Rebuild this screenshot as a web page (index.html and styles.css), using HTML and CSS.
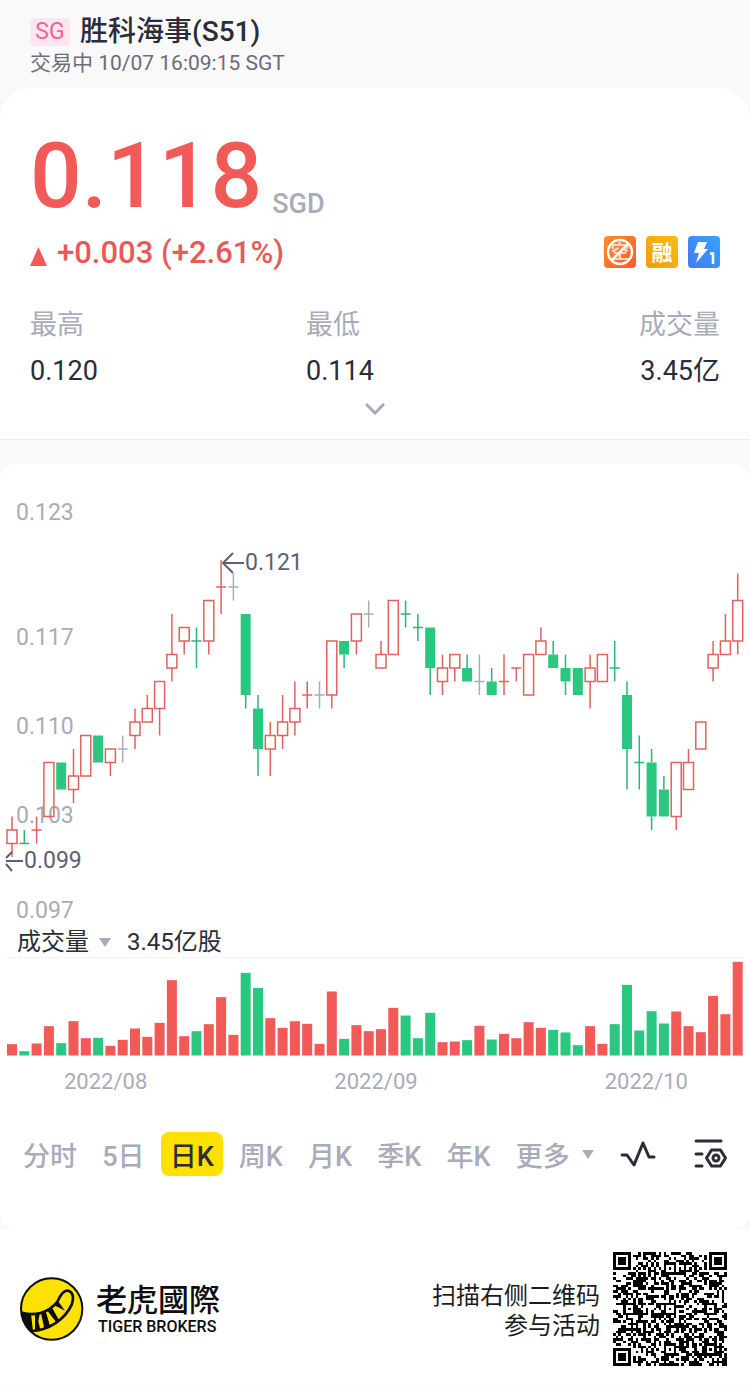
FILE: index.html
```html
<!DOCTYPE html>
<html lang="zh-CN">
<head>
    <meta charset="UTF-8">
    <meta name="viewport" content="width=device-width, initial-scale=1.0">
    <title>胜科海事(S51)</title>
    <link rel="stylesheet" href="styles.css">
</head>
<body>
    <header class="header">
        <h1 class="stock-name"><span class="market">SG</span>胜科海事(S51)</h1>
        <p class="status">交易中 10/07 16:09:15 SGT</p>
    </header>

    <main>
        <section class="quote">
            <div class="price-row">
                <span class="price">0.118</span>
                <span class="currency">SGD</span>
            </div>
            <div class="change-row">
                <svg class="up" viewBox="0 0 17 19" aria-hidden="true"><path d="M8.500 0L17 19H0z"/></svg>
                <span class="change">+0.003 (+2.61%)</span>
                <div class="badges">
                    <svg class="badge" viewBox="0 0 32 32" role="img" aria-label="禁止卖空">
                        <defs><linearGradient id="orange" x1="0" y1="0" x2="1" y2="1"><stop offset="0" stop-color="#fb8c2c"/><stop offset="1" stop-color="#fb5c2a"/></linearGradient></defs>
                        <rect width="32" height="32" rx="4" fill="url(#orange)"/>
                        <text x="16" y="23" class="badge-short">空</text>
                        <circle cx="16" cy="16" r="12" fill="none" stroke="#fff" stroke-width="2.500"/>
                        <path d="M7.500 24.500l17-17" stroke="#fff" stroke-width="2.500"/>
                    </svg>
                    <svg class="badge" viewBox="0 0 32 32" role="img" aria-label="可融资">
                        <defs><linearGradient id="amber" x1="1" y1="0" x2="0" y2="1"><stop offset="0" stop-color="#fbbc18"/><stop offset="1" stop-color="#f09c08"/></linearGradient></defs>
                        <rect width="32" height="32" rx="4" fill="url(#amber)"/>
                        <text x="16" y="24" class="badge-margin">融</text>
                    </svg>
                    <svg class="badge" viewBox="0 0 32 32" role="img" aria-label="Level 1">
                        <defs><linearGradient id="blue" x1="1" y1="0" x2="0" y2="1"><stop offset="0" stop-color="#35a5ff"/><stop offset="1" stop-color="#4379f2"/></linearGradient></defs>
                        <rect width="32" height="32" rx="4" fill="url(#blue)"/>
                        <path d="M10 6h9l-3 7h4L8 27l3-10H6z" fill="#fff"/>
                        <path d="M22 17.500h3V28" fill="none" stroke="#fff" stroke-width="2.500"/>
                    </svg>
                </div>
            </div>
            <dl class="stats">
                <div><dt>最高</dt><dd>0.120</dd></div>
                <div><dt>最低</dt><dd>0.114</dd></div>
                <div class="right"><dt>成交量</dt><dd>3.45亿</dd></div>
            </dl>
            <button class="expand" aria-label="展开">
                <svg viewBox="0 0 20 12"><path d="M1 1l9 9 9-9"/></svg>
            </button>
        </section>

        <section class="chart">
            <svg class="candles" viewBox="0 484 750 440" role="img" aria-label="日K线图">
                <g class="axis">
                    <text x="16" y="520">0.123</text>
                    <text x="16" y="645">0.117</text>
                    <text x="16" y="734">0.110</text>
                    <text x="16" y="823">0.103</text>
                    <text x="16" y="918">0.097</text>
                </g>
                <g id="candles" stroke-width="1.500"></g>
                <g class="mark">
                    <path d="M233 553l-10 10 10 10M223 563h21"/>
                    <text x="245" y="570">0.121</text>
                    <path d="M12 852l-6 6M6 864l6 7M6 861h17"/>
                    <text x="24" y="868">0.099</text>
                </g>
            </svg>
            <div class="volume-title">
                <button class="indicator">成交量<svg class="down" viewBox="0 0 12 9" aria-hidden="true"><path d="M0 0h12L6 9z"/></svg></button>
                <span>3.45亿股</span>
            </div>
            <svg class="volumes" viewBox="0 957 750 99" role="img" aria-label="成交量图">
                <path d="M7 957.500h737" stroke="#f3f3f5"/>
                <g id="volumes"></g>
            </svg>
            <div class="dates">
                <span>2022/08</span>
                <span>2022/09</span>
                <span>2022/10</span>
            </div>
            <nav class="tabs">
                <button>分时</button>
                <button>5日</button>
                <button class="active">日K</button>
                <button>周K</button>
                <button>月K</button>
                <button>季K</button>
                <button>年K</button>
                <button>更多<svg class="down" viewBox="0 0 12 9" aria-hidden="true"><path d="M0 0h12L6 9z"/></svg></button>
                <button class="tool" aria-label="指标">
                    <svg viewBox="0 0 36 32"><path d="M2 17h5l7 10 9-22 6 14h5"/></svg>
                </button>
                <button class="tool settings" aria-label="设置">
                    <svg viewBox="0 0 36 32"><path d="M5 3h25M5 16h6M5 28h6"/><path d="M20.500 12h9l5 8-5 8h-9l-5-8z"/><circle cx="25" cy="20" r="3"/></svg>
                </button>
            </nav>
        </section>
    </main>

    <footer class="footer">
        <svg class="logo" viewBox="0 0 198 198" role="img" aria-label="老虎國際">
            <defs><clipPath id="disc"><circle cx="98" cy="99" r="92"/></clipPath></defs>
            <circle cx="98" cy="99" r="92" fill="#ffe100"/>
            <g clip-path="url(#disc)">
                <path d="M0 108C45 122 88 112 116 76C126 52 136 42 148 44C166 50 163 72 158 86C138 130 90 163 36 165" fill="none" stroke="#0d0d0b" stroke-width="8"/>
                <path d="M4 105L36 114L42 166L28 158L8 130zM48 114L62 113L58 136L64 162L48 164zM66 112L80 106L94 152L76 158zM84 103L98 93L122 136L114 142zM106 88L119 78L138 104z" fill="#0d0d0b"/>
            </g>
            <circle cx="98" cy="99" r="92" fill="none" stroke="#0d0d0b" stroke-width="6"/>
        </svg>
        <div class="brand">
            <strong lang="zh-TW">老虎國際</strong>
            <span>TIGER BROKERS</span>
        </div>
        <p class="scan">扫描右侧二维码<br>参与活动</p>
        <svg class="qr" viewBox="0 0 45 45" role="img" aria-label="二维码"><path id="qr"/></svg>
    </footer>
    <script src="script.js"></script>
</body>
</html>
```
FILE: styles.css
```css
* {
    box-sizing: border-box;
}
body {
    font-family: Roboto, "Noto Sans CJK SC", sans-serif;
    background-color: #f9f9f9;
    color: #2b2c38;
    margin: 0;
}
h1, p, dl, dd {
    margin: 0;
}
button {
    font: inherit;
    color: inherit;
    background: none;
    border: none;
    padding: 0;
    cursor: pointer;
}
svg {
    display: block;
}
.header {
    height: 88px;
    padding: 15px 30px 0;
}
.stock-name {
    display: flex;
    align-items: center;
    gap: 10px;
    font-size: 28px;
    line-height: 34px;
    font-weight: 500;
}
.market {
    width: 40px;
    border-radius: 4px;
    background-color: #fce6ef;
    color: #f0609f;
    font-size: 23px;
    line-height: 28px;
    font-weight: 400;
    text-align: center;
}
.status {
    color: #6a6b7d;
    font-size: 21px;
    line-height: 28px;
}
.quote {
    background-color: #fff;
    border-bottom: 1px solid #ececef;
    border-radius: 32px 32px 0 0;
    padding: 32px 30px 24px;
}
.price-row {
    display: flex;
    align-items: flex-end;
    gap: 10px;
}
.price {
    color: #f25a58;
    font-size: 91px;
    font-weight: 500;
    line-height: 112px;
}
.currency {
    margin-bottom: 12px;
    color: #a9abb8;
    font-size: 27px;
    font-weight: 500;
    line-height: 32px;
}
.change-row {
    display: flex;
    align-items: center;
    gap: 10px;
    height: 40px;
}
.up {
    width: 17px;
    height: 19px;
    margin-top: 8px;
    fill: #f25a58;
}
.change {
    color: #e85a58;
    font-size: 31px;
    font-weight: 500;
}
.badges {
    display: flex;
    gap: 10px;
    margin-left: auto;
}
.badge {
    width: 32px;
    height: 32px;
}
.badge text {
    fill: #fff;
    font-weight: 700;
    text-anchor: middle;
}
.badge-short {
    font-size: 19px;
    opacity: 0.7;
}
.badge-margin {
    font-size: 21px;
}
.stats {
    display: grid;
    grid-template-columns: 2fr 2fr 1fr;
    margin-top: 30px;
    font-size: 27px;
}
.stats dt {
    color: #a9abb8;
    line-height: 46px;
}
.stats dd {
    line-height: 46px;
}
.stats .right {
    text-align: right;
    white-space: nowrap;
}
.expand {
    display: block;
    margin: 9px auto 0;
}
.expand svg {
    width: 20px;
    height: 12px;
    fill: none;
    stroke: #a9abb8;
    stroke-width: 3;
}
.chart {
    background-color: #fff;
    border-radius: 16px;
    margin-top: 24px;
    padding: 20px 0 53px;
}
.candles, .volumes {
    width: 100%;
}
.candles text {
    font-size: 23px;
}
.axis {
    fill: #a9abb8;
}
.mark path {
    fill: none;
    stroke: #5e5f73;
    stroke-width: 2;
}
.mark text {
    fill: #5e5f73;
}
.red {
    fill: #f25a58;
    stroke: #e4605e;
}
.green {
    fill: #2ac780;
    stroke: #2ab677;
}
.gray {
    stroke: #a9abb8;
}
.box {
    fill: none;
}
.solid {
    stroke: none;
}
.volume-title {
    display: flex;
    gap: 16px;
    padding: 3px 0 0 17px;
    font-size: 24px;
    line-height: 30px;
}
.indicator {
    display: flex;
    align-items: center;
    gap: 10px;
}
.down {
    width: 12px;
    height: 9px;
    fill: #a9abb8;
}
.dates {
    display: flex;
    justify-content: space-between;
    padding: 10px 62px 0 64px;
    color: #a9abb8;
    font-size: 22px;
    line-height: 32px;
}
.tabs {
    display: flex;
    justify-content: space-between;
    align-items: center;
    margin-top: 34px;
    padding: 0 23px 0 14px;
    color: #a9abb8;
    font-size: 27px;
    font-weight: 500;
}
.tabs button {
    display: flex;
    align-items: center;
    gap: 12px;
    height: 44px;
    padding: 0 9px;
    border-radius: 8px;
}
.tabs .active {
    background-color: #ffe100;
    color: #2b2c38;
}
.tabs .tool {
    padding: 0 0 0 10px;
}
.tabs .settings {
    padding-left: 28px;
}
.tool svg {
    width: 36px;
    height: 32px;
    fill: none;
    stroke: #2b2c38;
    stroke-width: 3;
    stroke-linecap: round;
    stroke-linejoin: round;
}
.footer {
    display: flex;
    align-items: center;
    background-color: #fff;
    height: 160px;
    padding: 0 23px 0 19px;
}
.logo {
    width: 66px;
    height: 66px;
}
.brand {
    display: flex;
    flex-direction: column;
    margin-left: 11px;
    color: #0d0d0b;
}
.brand strong {
    font-family: "Noto Sans CJK TC", sans-serif;
    font-size: 31px;
    font-weight: 500;
    line-height: 36px;
}
.brand span {
    padding-left: 2px;
    font-size: 16px;
    font-weight: 500;
    line-height: 22px;
}
.scan {
    margin-left: auto;
    margin-right: 13px;
    padding-top: 4px;
    color: #1c1c1c;
    font-size: 24px;
    line-height: 30px;
    text-align: right;
}
.qr {
    width: 114px;
    height: 114px;
    shape-rendering: crispEdges;
}
```
FILE: script.js
```js
// [color, body top, body bottom, high, low, volume], prices in 0.001 SGD
const days = [
    ['red', 101, 100, 102, 99, 34], ['green', 100, 100, 101, 100, 13], ['red', 101, 101, 102, 100, 36],
    ['red', 106, 102, 106, 102, 88], ['green', 106, 104, 106, 104, 37], ['red', 105, 104, 107, 103, 103],
    ['red', 108, 105, 108, 105, 52], ['green', 108, 106, 108, 106, 53], ['red', 107, 106, 107, 105, 29],
    ['gray', 107, 107, 108, 106, 47], ['red', 109, 108, 110, 107, 81], ['red', 110, 109, 111, 109, 56],
    ['red', 112, 110, 112, 108, 98], ['red', 114, 113, 117, 112, 226], ['red', 116, 115, 116, 114, 58],
    ['green', 115, 115, 116, 113, 73], ['red', 118, 115, 118, 114, 94], ['red', 119, 119, 121, 117, 175],
    ['gray', 119, 119, 120, 118, 62], ['green', 117, 111, 117, 110, 248], ['green', 110, 107, 111, 105, 203],
    ['red', 108, 107, 109, 105, 112], ['red', 109, 108, 111, 107, 83], ['red', 110, 109, 112, 108, 103],
    ['red', 111, 111, 112, 110, 95], ['gray', 111, 111, 112, 110, 35], ['red', 115, 111, 115, 110, 192],
    ['green', 115, 114, 115, 113, 50], ['red', 117, 115, 117, 114, 91], ['gray', 117, 117, 118, 116, 73],
    ['red', 114, 113, 115, 113, 79], ['red', 118, 114, 118, 114, 143], ['green', 117, 117, 118, 116, 120],
    ['green', 116, 116, 117, 115, 52], ['green', 116, 113, 116, 111, 128], ['red', 113, 112, 114, 111, 40],
    ['red', 114, 113, 114, 112, 42], ['green', 113, 112, 114, 112, 46], ['gray', 112, 112, 114, 111, 89],
    ['green', 112, 111, 113, 111, 48], ['red', 112, 112, 114, 111, 65], ['red', 113, 113, 113, 112, 52],
    ['red', 114, 111, 114, 111, 100], ['red', 115, 114, 116, 114, 83], ['green', 114, 113, 115, 113, 77],
    ['green', 113, 112, 114, 111, 69], ['green', 113, 111, 113, 111, 31], ['red', 113, 112, 114, 110, 88],
    ['red', 114, 112, 114, 112, 35], ['green', 113, 113, 115, 112, 94], ['green', 111, 107, 112, 104, 212],
    ['green', 106, 106, 108, 104, 75], ['green', 106, 102, 107, 101, 133], ['green', 104, 102, 105, 102, 96],
    ['red', 106, 102, 106, 101, 132], ['red', 106, 104, 107, 104, 88], ['red', 109, 107, 109, 107, 70],
    ['red', 114, 113, 115, 112, 179], ['red', 115, 114, 117, 114, 124], ['red', 118, 115, 120, 114, 281]
];

const y = price => 560 + (121 - price) * 13.5;
let candles = '';
let volumes = '';

days.forEach(([color, top, bottom, high, low, volume], i) => {
    const x = 12 + i * 12.3;
    candles += `<path class="${color}" d="M${x} ${y(high)}V${y(top)}M${x} ${y(bottom)}V${y(low)}"/>`;
    if (top === bottom) {
        candles += `<path class="${color}" d="M${x - 5} ${y(top)}h10"/>`;
    } else if (color === 'red') {
        candles += `<rect class="red box" x="${x - 5}" y="${y(top)}" width="10" height="${y(bottom) - y(top)}"/>`;
    } else {
        candles += `<rect class="${color} solid" x="${x - 5}" y="${y(top)}" width="10" height="${y(bottom) - y(top)}"/>`;
    }
    const bar = volume / 3;
    volumes += `<rect class="${color === 'green' ? 'green' : 'red'} solid" x="${x - 5}" y="${1055.5 - bar}" width="10" height="${bar}"/>`;
});

document.getElementById('candles').innerHTML = candles;
document.getElementById('volumes').innerHTML = volumes;

// QR code, 45 x 45 modules
const size = 45;
const ring = (dx, dy) => Math.max(Math.abs(dx), Math.abs(dy));
const aligns = [[6, 22], [22, 6], [22, 22], [22, 38], [38, 22], [38, 38]];
let seed = 51;

function random() {
    seed = (seed * 1103515245 + 12345) % 2147483648;
    return seed / 2147483648;
}

function isDark(col, row) {
    const noise = random() < 0.5;
    for (const [cx, cy] of [[3, 3], [size - 4, 3], [3, size - 4]]) {
        const d = ring(col - cx, row - cy);
        if (d <= 4) return d !== 4 && d !== 2;
    }
    for (const [cx, cy] of aligns) {
        const d = ring(col - cx, row - cy);
        if (d <= 2) return d !== 1;
    }
    if (col === 6 || row === 6) return (col + row) % 2 === 0;
    return noise;
}

let modules = '';
for (let row = 0; row < size; row++) {
    for (let col = 0; col < size; col++) {
        if (isDark(col, row)) modules += `M${col} ${row}h1v1h-1z`;
    }
}
document.getElementById('qr').setAttribute('d', modules);
```
